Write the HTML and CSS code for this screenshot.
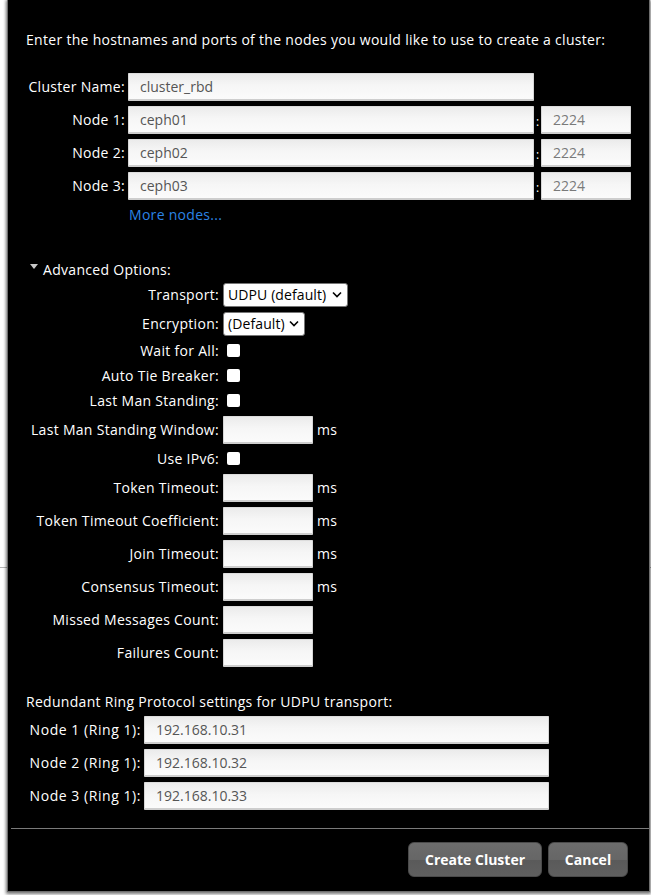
FILE: index.html
```html
<!DOCTYPE html>
<html>
<head>
<meta charset="utf-8">
<link rel="stylesheet" href="styles.css">
</head>
<body>
<div class="page"></div>
<div class="dialog">
  <div class="content">
    <p class="intro">Enter the hostnames and ports of the nodes you would like to use to create a cluster:</p>
    <div class="nodes">
      <div class="row">
        <label class="lbl lbl-top">Cluster Name:</label>
        <input class="txt txt-name" type="text" value="cluster_rbd">
      </div>
      <div class="row">
        <label class="lbl lbl-top">Node 1:</label>
        <input class="txt txt-name" type="text" value="ceph01">
        <span class="colon">:</span>
        <input class="txt txt-port" type="text" placeholder="2224">
      </div>
      <div class="row">
        <label class="lbl lbl-top">Node 2:</label>
        <input class="txt txt-name" type="text" value="ceph02">
        <span class="colon">:</span>
        <input class="txt txt-port" type="text" placeholder="2224">
      </div>
      <div class="row">
        <label class="lbl lbl-top">Node 3:</label>
        <input class="txt txt-name" type="text" value="ceph03">
        <span class="colon">:</span>
        <input class="txt txt-port" type="text" placeholder="2224">
      </div>
      <div class="more-row"><a class="more" href="#">More nodes...</a></div>
    </div>

    <div class="adv-head">
      <svg class="tri" width="8" height="6" viewBox="0 0 8 6"><polygon points="0,0 8,0 4,5" fill="#c8c8c8"/></svg>
      <span>Advanced Options:</span>
    </div>
    <div class="adv">
      <div class="arow arow-sel">
        <label class="lbl lbl-adv">Transport:</label>
        <div class="select sel-transport"><span>UDPU (default)</span>
          <svg width="10" height="7" viewBox="0 0 10 7"><polyline points="1,1.5 5,5.5 9,1.5" fill="none" stroke="#000" stroke-width="1.6"/></svg>
        </div>
      </div>
      <div class="arow arow-sel">
        <label class="lbl lbl-adv">Encryption:</label>
        <div class="select sel-enc"><span>(Default)</span>
          <svg width="10" height="7" viewBox="0 0 10 7"><polyline points="1,1.5 5,5.5 9,1.5" fill="none" stroke="#000" stroke-width="1.6"/></svg>
        </div>
      </div>
      <div class="arow arow-chk">
        <label class="lbl lbl-adv">Wait for All:</label>
        <input class="chk" type="checkbox">
      </div>
      <div class="arow arow-chk">
        <label class="lbl lbl-adv">Auto Tie Breaker:</label>
        <input class="chk" type="checkbox">
      </div>
      <div class="arow arow-chk">
        <label class="lbl lbl-adv">Last Man Standing:</label>
        <input class="chk" type="checkbox">
      </div>
      <div class="arow arow-inp">
        <label class="lbl lbl-adv">Last Man Standing Window:</label>
        <input class="txt txt-small" type="text">
        <span class="unit">ms</span>
      </div>
      <div class="arow arow-chk">
        <label class="lbl lbl-adv">Use IPv6:</label>
        <input class="chk" type="checkbox">
      </div>
      <div class="arow arow-inp">
        <label class="lbl lbl-adv">Token Timeout:</label>
        <input class="txt txt-small" type="text">
        <span class="unit">ms</span>
      </div>
      <div class="arow arow-inp">
        <label class="lbl lbl-adv">Token Timeout Coefficient:</label>
        <input class="txt txt-small" type="text">
        <span class="unit">ms</span>
      </div>
      <div class="arow arow-inp">
        <label class="lbl lbl-adv">Join Timeout:</label>
        <input class="txt txt-small" type="text">
        <span class="unit">ms</span>
      </div>
      <div class="arow arow-inp">
        <label class="lbl lbl-adv">Consensus Timeout:</label>
        <input class="txt txt-small" type="text">
        <span class="unit">ms</span>
      </div>
      <div class="arow arow-inp">
        <label class="lbl lbl-adv">Missed Messages Count:</label>
        <input class="txt txt-small" type="text">
      </div>
      <div class="arow arow-inp">
        <label class="lbl lbl-adv">Failures Count:</label>
        <input class="txt txt-small" type="text">
      </div>
    </div>

    <p class="ring-head">Redundant Ring Protocol settings for UDPU transport:</p>
    <div class="ring">
      <div class="row">
        <label class="lbl lbl-ring">Node 1 (Ring 1):</label>
        <input class="txt txt-ring" type="text" value="192.168.10.31">
      </div>
      <div class="row">
        <label class="lbl lbl-ring">Node 2 (Ring 1):</label>
        <input class="txt txt-ring" type="text" value="192.168.10.32">
      </div>
      <div class="row">
        <label class="lbl lbl-ring">Node 3 (Ring 1):</label>
        <input class="txt txt-ring" type="text" value="192.168.10.33">
      </div>
    </div>
  </div>
  <div class="buttons">
    <button class="btn btn-create" type="button">Create Cluster</button>
    <button class="btn btn-cancel" type="button">Cancel</button>
  </div>
</div>
</body>
</html>
```
FILE: styles.css
```css
* { box-sizing: border-box; }
html, body { margin: 0; padding: 0; background: #fff; }
body {
  font-family: "Open Sans", "Noto Sans", sans-serif;
  font-size: 14px;
  letter-spacing: 0.3px;
  color: #fff;
  width: 651px;
  height: 895px;
  overflow: hidden;
  position: relative;
}
.page {
  height: 568px;
  border-bottom: 1px solid #b4b4b4;
}
.dialog {
  position: absolute;
  top: 0;
  left: 7px;
  width: 643px;
  height: 892px;
  background: #000;
  border: 1px solid #6e6e6e;
  border-top: none;
  box-shadow: 0 1px 3px 1px rgba(0,0,0,0.55);
  display: flex;
  flex-direction: column;
}
.content { padding: 0 0 0 18px; }
.intro {
  margin: 30px 0 0;
  line-height: 20px;
}
.nodes { margin-top: 20px; }
.row {
  display: flex;
  align-items: center;
  height: 33px;
}
.lbl {
  text-align: right;
  white-space: nowrap;
  line-height: 20px;
  flex: none;
}
.lbl-top { width: 99px; }
.lbl-adv { width: 193px; }
.lbl-ring { width: 115px; }
.lbl-ring { letter-spacing: 0.55px; }
.txt {
  height: 28px;
  margin: 0 0 0 3px;
  padding: 0 0 0 11px;
  font-family: inherit;
  font-size: 14px;
  letter-spacing: 0;
  color: #555;
  background: linear-gradient(#ebebeb, #f6f6f6 45%, #fbfbfb);
  border: 1px solid #d6d6d6;
  border-top-color: #dcdcdc;
  border-bottom: 2px solid #cecece;
  border-radius: 1px;
  outline: none;
  flex: none;
}
.txt::placeholder { color: #7a7a7a; }
.txt-name { width: 406px; }
.txt-port { width: 90px; margin-left: 0; }
.colon {
  width: 7px;
  text-align: center;
  font-size: 12px;
  line-height: 12px;
  margin-top: 4px;
  letter-spacing: 0;
}
.more-row {
  height: 25px;
  line-height: 25px;
  padding-left: 103px;
}
.more {
  color: #2b84e5;
  text-decoration: none;
}
.adv-head {
  margin-top: 32px;
  height: 20px;
  display: flex;
  align-items: center;
  padding-left: 4px;
}
.tri { margin-right: 5px; margin-top: -4px; }
.adv { margin-top: 1px; }
.arow {
  display: flex;
  align-items: center;
}
.arow-sel { height: 29px; }
.arow-chk { height: 25px; }
.arow-inp { height: 33px; }
.arow .txt { margin-left: 4px; }
.txt-small { width: 90px; }
.unit { margin-left: 4px; line-height: 20px; }
.select {
  margin-left: 4px;
  height: 24px;
  background: #fff;
  border: 1px solid #767676;
  border-radius: 3px;
  color: #000;
  display: flex;
  align-items: center;
  justify-content: space-between;
  padding: 0 5px 0 4px;
  line-height: 20px;
  letter-spacing: 0.1px;
}
.sel-transport { width: 125px; }
.sel-enc { width: 82px; }
.chk {
  -webkit-appearance: none;
  appearance: none;
  width: 13px;
  height: 13px;
  margin: 0 0 0 8px;
  background: #fff;
  border-radius: 2px;
  border: none;
}
.ring-head {
  margin: 23px 0 0;
  line-height: 20px;
}
.ring { margin-top: 1px; }
.txt-ring { width: 405px; }
.buttons {
  margin: 16px 0 0 3px;
  border-top: 1px solid #7a7a7a;
  padding: 13px 21px 0 0;
  display: flex;
  justify-content: flex-end;
  gap: 6px;
}
.btn {
  height: 35px;
  font-family: inherit;
  font-size: 14px;
  font-weight: 700;
  letter-spacing: 0;
  color: #fff;
  border: 1px solid #4a4a4a;
  border-radius: 6px;
  background: linear-gradient(#6c6c6c 0%, #666 50%, #5a5a5a 52%, #5f5f5f 100%);
  padding: 0;
}
.btn-create { width: 134px; }
.btn-cancel { width: 80px; }
```
